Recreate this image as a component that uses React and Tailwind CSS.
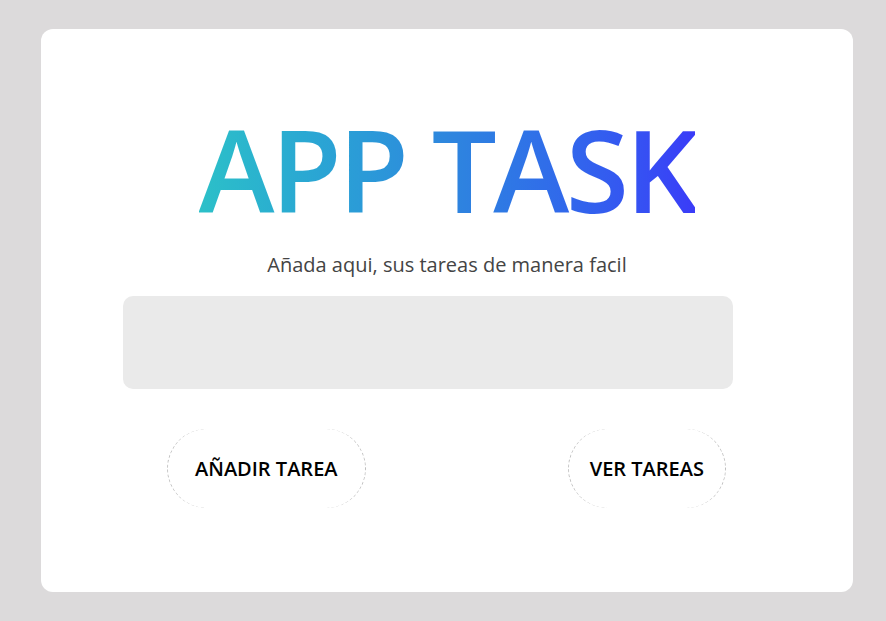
export default function App() {
  return (
    <div className="min-h-screen w-full bg-[#dcdadb] pt-[29px] pb-[29px] pl-[41px] pr-[33px] font-['Open_Sans',sans-serif]">
      <div className="h-[563px] w-full rounded-[12px] bg-white flex flex-col items-center">
        <h1 className="mt-[82px] text-[115px] leading-none font-semibold tracking-[-3.5px] bg-gradient-to-r from-[#2cc0c8] via-[#2e86de] to-[#3a3bf8] bg-clip-text text-transparent">
          APP TASK
        </h1>
        <p className="mt-[24px] text-[20px] leading-[30px] text-[#444444]">
          Añada aqui, sus tareas de manera facil
        </p>
        <div className="mt-[16px] self-start ml-[82px] w-[610px] h-[93px] rounded-[10px] bg-[#eaeaea]"></div>
        <div className="mt-[40px] self-start ml-[126px] w-[559px] flex justify-between">
          <button className="h-[79px] px-[27px] rounded-[40px] border-x border-dashed border-[#bdbdbd] text-[20px] font-semibold text-black">
            AÑADIR TAREA
          </button>
          <button className="h-[79px] px-[21px] rounded-[40px] border-x border-dashed border-[#bdbdbd] text-[20px] font-semibold text-black">
            VER TAREAS
          </button>
        </div>
      </div>
    </div>
  );
}
